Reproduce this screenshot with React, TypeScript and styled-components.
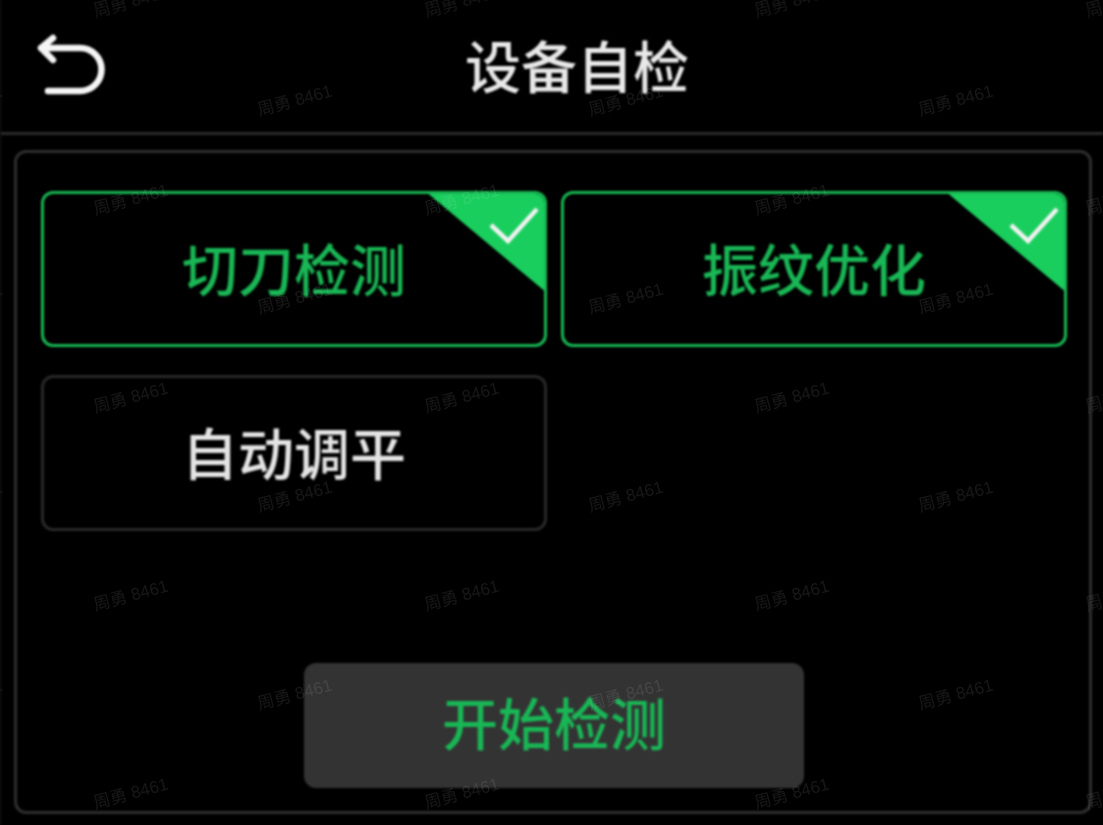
import React from "react";
import styled, { createGlobalStyle } from "styled-components";

const Global = createGlobalStyle`
  html, body { margin: 0; padding: 0; background: #000; }
  body { font-family: "Noto Sans CJK SC", "Noto Sans", sans-serif; }
`;

const Screen = styled.div`
  position: relative;
  width: 1103px;
  height: 825px;
  background: #000;
  overflow: hidden;
`;

const Content = styled.div`
  width: 100%;
  height: 100%;
  box-sizing: border-box;
  border-left: 1px solid #1c1c1c;
  display: flex;
  flex-direction: column;
  filter: blur(0.8px);
`;

const Header = styled.header`
  position: relative;
  height: 135px;
  flex: none;
  box-sizing: border-box;
  border-bottom: 3px solid #2a2a2a;
  display: flex;
  align-items: center;
  justify-content: center;
  padding: 0 0 5px 50px;
`;

const BackButton = styled.button`
  position: absolute;
  left: 33px;
  top: 32px;
  width: 74px;
  height: 68px;
  padding: 0;
  border: 0;
  background: none;
`;

const Title = styled.h1`
  margin: 0;
  color: #e8e8e8;
  font-size: 56px;
  line-height: 70px;
  font-weight: 500;
`;

const Panel = styled.main`
  flex: none;
  width: 1078px;
  height: 664px;
  margin: 15px 0 0 13px;
  box-sizing: border-box;
  border: 3px solid #2e2e2e;
  border-radius: 12px;
  padding: 38px 23px 23px 24px;
  display: flex;
  flex-direction: column;
`;

const Grid = styled.div`
  display: grid;
  grid-template-columns: 506px 506px;
  grid-auto-rows: 156px;
  column-gap: 14px;
  row-gap: 28px;
`;

const Card = styled.div<{ $active?: boolean }>`
  position: relative;
  overflow: hidden;
  box-sizing: border-box;
  border: 3px solid ${(p) => (p.$active ? "#17b552" : "#282828")};
  border-radius: 12px;
  display: flex;
  align-items: center;
  justify-content: center;
  padding-bottom: 5px;
  color: ${(p) => (p.$active ? "#19b655" : "#e4e4e4")};
  font-size: 56px;
  font-weight: 500;
  line-height: 70px;
`;

const Corner = styled.span`
  position: absolute;
  top: -3px;
  right: -3px;
  width: 122px;
  height: 102px;
  background: #1ace5e;
  clip-path: polygon(0 0, 100% 0, 100% 100%);
`;

const Tick = styled.svg`
  position: absolute;
  top: -3px;
  right: -3px;
  width: 120px;
  height: 102px;
`;

const StartButton = styled.button`
  align-self: flex-start;
  margin: auto 0 0 263px;
  width: 500px;
  height: 125px;
  border: 0;
  border-radius: 12px;
  background: #333;
  color: #19b655;
  font-family: inherit;
  font-size: 56px;
  font-weight: 500;
  line-height: 70px;
  padding: 0 0 9px;
`;

const WatermarkLayer = styled.div`
  position: absolute;
  inset: 0;
  pointer-events: none;
  filter: blur(0.3px);
`;

const Watermark = styled.span.attrs<{ $x: number; $y: number }>((p) => ({
  style: { left: p.$x, top: p.$y },
}))<{ $x: number; $y: number }>`
  position: absolute;
  color: rgba(255, 255, 255, 0.09);
  font-family: "Liberation Sans", "Noto Sans CJK SC", sans-serif;
  font-size: 17px;
  line-height: 24px;
  white-space: nowrap;
  transform: rotate(-15deg);
  transform-origin: left center;
`;

const marks: { x: number; y: number }[] = [];
for (let r = 0; r < 9; r++) {
  const odd = r % 2 === 1;
  const y = 99 * r;
  for (let c = -1; c < 4; c++) {
    marks.push({ x: (odd ? 258 : 94) + c * 330.5, y });
  }
}

function CardCheck() {
  return (
    <>
      <Corner />
      <Tick viewBox="0 0 120 102" fill="none">
        <path d="M64 34 L81 50 L110 18" stroke="#f2f2f2" strokeWidth="4.5" />
      </Tick>
    </>
  );
}

export default function App() {
  return (
    <Screen>
      <Global />
      <Content>
        <Header>
          <BackButton aria-label="返回">
            <svg width="74" height="68" viewBox="34 32 74 68" fill="none">
              <path
                d="M53 38 L41 48 L53 60 M41 48 H80 A21.5 21.5 0 0 1 80 91 H48"
                stroke="#f5f5f5"
                strokeWidth="6.5"
                strokeLinecap="round"
                strokeLinejoin="round"
              />
            </svg>
          </BackButton>
          <Title>设备自检</Title>
        </Header>
        <Panel>
          <Grid>
            <Card $active>
              切刀检测
              <CardCheck />
            </Card>
            <Card $active>
              振纹优化
              <CardCheck />
            </Card>
            <Card>自动调平</Card>
          </Grid>
          <StartButton>开始检测</StartButton>
        </Panel>
      </Content>
      <WatermarkLayer>
        {marks.map((m) => (
          <Watermark key={`${m.x}-${m.y}`} $x={m.x} $y={m.y}>
            周勇 8461
          </Watermark>
        ))}
      </WatermarkLayer>
    </Screen>
  );
}
